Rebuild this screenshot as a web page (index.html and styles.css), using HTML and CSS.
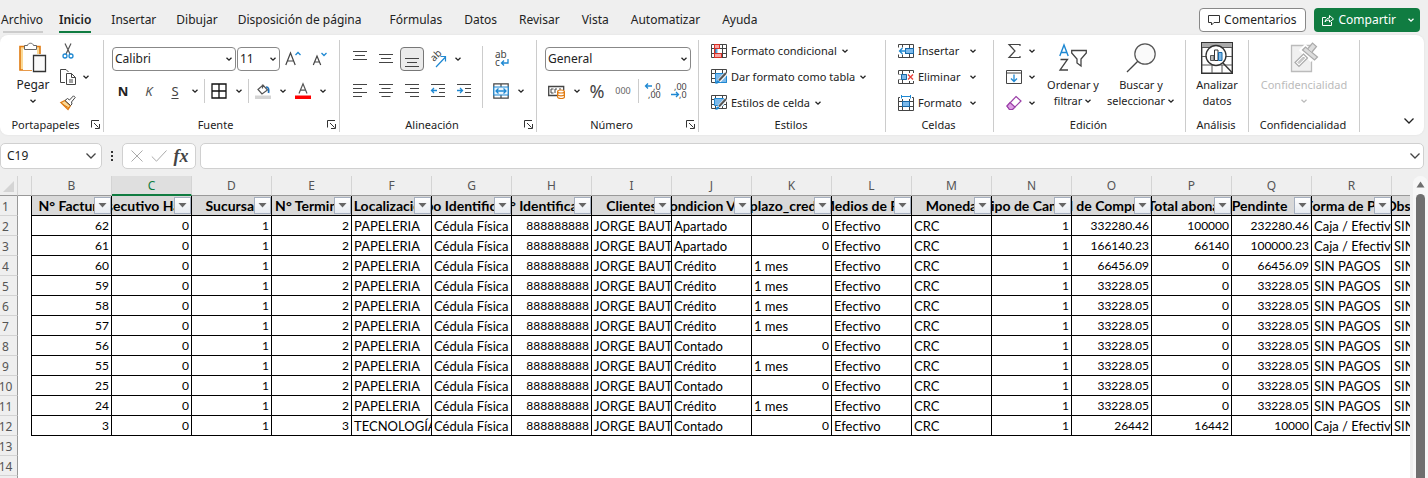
FILE: index.html
```html
<!DOCTYPE html>
<html lang="es">
<head>
<meta charset="utf-8">
<title>Facturas</title>
<link rel="stylesheet" href="styles.css">
</head>
<body>
<svg class="defs" aria-hidden="true">
  <symbol id="chev" viewBox="0 0 8 8"><path d="M1.5 2.8 4 5.2 6.5 2.8" fill="none" stroke="currentColor" stroke-width="1.3"/></symbol>
  <symbol id="launch" viewBox="0 0 9 9"><path d="M.5 7.500V.5H8M3 3l4.500 4.500M8.500 4v4.500H4" fill="none" stroke="#333"/></symbol>
  <symbol id="tablebase" viewBox="0 0 16 14"><path d="M.5.5h15v13H.5zM.5 4.500h15M.5 9.500h15M4.500.5v13M11.500.5v13" fill="#fff" stroke="#444"/></symbol>
</svg>

<div class="topbar">
  <nav class="tabs">
    <button class="tab tab-file">Archivo</button>
    <button class="tab tab-active">Inicio</button>
    <button class="tab">Insertar</button>
    <button class="tab">Dibujar</button>
    <button class="tab tab-wide">Disposición de página</button>
    <button class="tab">Fórmulas</button>
    <button class="tab">Datos</button>
    <button class="tab">Revisar</button>
    <button class="tab">Vista</button>
    <button class="tab">Automatizar</button>
    <button class="tab">Ayuda</button>
  </nav>
  <div class="actions">
    <button class="comments"><svg width="12" height="12" viewBox="0 0 12 12"><path d="M.5 1.500h11v7H6L3.500 11V8.500h-3z" fill="none" stroke="#333"/></svg>Comentarios</button>
    <button class="share"><svg width="12" height="12" viewBox="0 0 12 12"><path d="M4 3.500H.5v8h9V8M3 8c.5-3 2.500-4 4.500-4V1.500L11.500 5 7.500 8V6C5.500 6 4 6.500 3 8z" fill="none" stroke="#fff"/></svg>Compartir<svg class="chev share-chev"><use href="#chev"/></svg></button>
  </div>
</div>

<div class="ribbon">
  <section class="group g-clip">
    <div class="body">
      <button class="big">
        <svg width="28" height="32" viewBox="0 0 28 32"><path d="M1 4.500h20V28H1z" fill="#fbd995" stroke="#e07a10" stroke-width="1.600"/><path d="M4 7h14v21H4z" fill="#fff"/><path d="M5.500 7.500v-4h3C9 .5 14 .5 14.500 3.500h3v4z" fill="#fff" stroke="#666"/><path d="M13 12h14v18H13z" fill="#fff"/><path d="M14.500 13.500h12v16h-12z" fill="#fafafa" stroke="#333" stroke-width="1.300"/></svg>
        <span>Pegar</span><svg class="chev"><use href="#chev"/></svg>
      </button>
      <div class="stack">
        <button class="mini" aria-label="Cortar"><svg width="16" height="16" viewBox="0 0 16 16"><path d="M5 .5 10 11M11 .5 6 11" fill="none" stroke="#555" stroke-width="1.200"/><circle cx="5" cy="13" r="2" fill="#fff" stroke="#1e88d2" stroke-width="1.300"/><circle cx="11" cy="13" r="2" fill="#fff" stroke="#1e88d2" stroke-width="1.300"/></svg></button>
        <button class="mini" aria-label="Copiar"><svg width="16" height="16" viewBox="0 0 16 16"><path d="M5 13.500H.5V.5H6L8.500 3" fill="none" stroke="#444"/><path d="M6.500 4.500h5l4 4v7h-9zM11.500 4.500v4h4M9 11h4M9 13h4" fill="#fff" stroke="#444"/></svg><svg class="chev"><use href="#chev"/></svg></button>
        <button class="mini" aria-label="Copiar formato"><svg width="16" height="16" viewBox="0 0 16 16"><path d="M.8 7.500 5 5.500l5.500 5-2.500 4z" fill="#fbd995" stroke="#e07a10" stroke-width="1.300"/><path d="M3 9.500 9 13" stroke="#e07a10"/><path d="M5 5.500 7.500 3.500l2 1.500L13.500.8l1.700 1.700L11.500 7l.5 2-1.500 1.500z" fill="#fff" stroke="#444"/></svg></button>
      </div>
    </div>
    <footer><span>Portapapeles</span><button class="launch" aria-label="Opciones del portapapeles"><svg width="9" height="9"><use href="#launch"/></svg></button></footer>
  </section>

  <section class="group g-font">
    <div class="body rows">
      <div class="row">
        <label class="combo combo-font"><select aria-label="Fuente"><option>Calibri</option></select><svg class="chev"><use href="#chev"/></svg></label>
        <label class="combo combo-size"><select aria-label="Tamaño"><option>11</option></select><svg class="chev"><use href="#chev"/></svg></label>
        <button class="ic" aria-label="Aumentar tamaño"><svg width="16" height="16" viewBox="0 0 16 16"><path d="M.8 14 5.500 2 10.200 14M2.400 10h6.200" fill="none" stroke="#444" stroke-width="1.200"/><path d="M10.500 4 13 1.500 15.500 4" fill="none" stroke="#1e88d2" stroke-width="1.300"/></svg></button>
        <button class="ic" aria-label="Reducir tamaño"><svg width="16" height="16" viewBox="0 0 16 16"><path d="M2.300 14 6 5l3.700 9M3.600 11h4.800" fill="none" stroke="#444" stroke-width="1.200"/><path d="M10.500 2 13 4.500 15.500 2" fill="none" stroke="#1e88d2" stroke-width="1.300"/></svg></button>
      </div>
      <div class="row">
        <button class="ic bold">N</button><button class="ic italic">K</button><button class="ic under">S</button><button class="dd" aria-label="Más subrayados"><svg class="chev"><use href="#chev"/></svg></button>
        <i class="sep"></i>
        <button class="ic" aria-label="Bordes"><svg width="16" height="16" viewBox="0 0 16 16"><path d="M1 1h14v14H1zM8 1v14M1 8h14" fill="none" stroke="#111" stroke-width="1.300"/></svg></button><button class="dd" aria-label="Más bordes"><svg class="chev"><use href="#chev"/></svg></button>
        <i class="sep"></i>
        <button class="ic" aria-label="Color de relleno"><svg width="16" height="16" viewBox="0 0 16 16"><path d="M7.500 1.500v4M3 6.500 8 2l4.500 5L7 11z" fill="#fff" stroke="#555" stroke-width="1.200"/><path d="M11 4c3 0 3 3 2.500 6" fill="none" stroke="#1e6fb8" stroke-width="1.700"/><path d="M0 12.500h16V16H0z" fill="#d4d4d4"/></svg></button><button class="dd" aria-label="Más rellenos"><svg class="chev"><use href="#chev"/></svg></button>
        <button class="ic" aria-label="Color de fuente"><svg width="16" height="16" viewBox="0 0 16 16"><path d="M4 10.500 8 .8l4 9.700M5.400 7.200h5.200" fill="none" stroke="#555" stroke-width="1.200"/><path d="M0 12.500h16V16H0z" fill="#f00"/></svg></button><button class="dd" aria-label="Más colores"><svg class="chev"><use href="#chev"/></svg></button>
      </div>
    </div>
    <footer><span>Fuente</span><button class="launch" aria-label="Opciones de fuente"><svg width="9" height="9"><use href="#launch"/></svg></button></footer>
  </section>

  <section class="group g-align">
    <div class="body">
      <div class="rows">
        <div class="row">
          <button class="ic" aria-label="Alinear arriba"><svg width="16" height="16" viewBox="0 0 16 16"><path d="M1 .5h14M3 4.500h10M1 8.500h14" stroke="#444"/></svg></button>
          <button class="ic" aria-label="Alinear al medio"><svg width="16" height="16" viewBox="0 0 16 16"><path d="M1 3.500h14M3 7.500h10M1 11.500h14" stroke="#444"/></svg></button>
          <button class="ic on" aria-label="Alinear abajo"><svg width="16" height="16" viewBox="0 0 16 16"><path d="M1 7.500h14M3 11.500h10M1 15.500h14" stroke="#444"/></svg></button>
          <button class="ic" aria-label="Orientación"><svg width="18" height="18" viewBox="0 0 18 18"><text class="ab" x="0" y="0" transform="translate(5 12) rotate(-45)">ab</text><path d="m7 17 9.500-10M11.500 6.500h5v5" fill="none" stroke="#1e88d2" stroke-width="1.200"/></svg></button><button class="dd" aria-label="Más orientaciones"><svg class="chev"><use href="#chev"/></svg></button>
        </div>
        <div class="row">
          <button class="ic" aria-label="Izquierda"><svg width="16" height="16" viewBox="0 0 16 16"><path d="M1 1.500h14M1 5.500h9M1 9.500h14M1 13.500h9" stroke="#444"/></svg></button>
          <button class="ic" aria-label="Centro"><svg width="16" height="16" viewBox="0 0 16 16"><path d="M1 1.500h14M3.500 5.500h9M1 9.500h14M3.500 13.500h9" stroke="#444"/></svg></button>
          <button class="ic" aria-label="Derecha"><svg width="16" height="16" viewBox="0 0 16 16"><path d="M1 1.500h14M6 5.500h9M1 9.500h14M6 13.500h9" stroke="#444"/></svg></button>
          <button class="ic" aria-label="Disminuir sangría"><svg width="16" height="16" viewBox="0 0 16 16"><path d="M1 1.500h14M9 5.500h6M9 9.500h6M1 13.500h14" stroke="#444"/><path d="M7 7.500H1.500M4 5 1.500 7.500 4 10" fill="none" stroke="#1e88d2" stroke-width="1.300"/></svg></button>
          <button class="ic" aria-label="Aumentar sangría"><svg width="16" height="16" viewBox="0 0 16 16"><path d="M1 1.500h14M9 5.500h6M9 9.500h6M1 13.500h14" stroke="#444"/><path d="M1 7.500h5.500M4 5l2.500 2.500L4 10" fill="none" stroke="#1e88d2" stroke-width="1.300"/></svg></button>
        </div>
      </div>
      <i class="vline"></i>
      <div class="rows">
        <div class="row">
          <button class="ic" aria-label="Ajustar texto"><svg width="18" height="18" viewBox="0 0 18 18"><text class="wrap" x="3" y="8">ab</text><text class="wrap" x="3" y="16">c</text><path d="M16 9v4H9.500M12 10.500 9.500 13l2.500 2.500" fill="none" stroke="#1e88d2" stroke-width="1.300"/></svg></button>
        </div>
        <div class="row">
          <button class="ic" aria-label="Combinar y centrar"><svg width="16" height="16" viewBox="0 0 16 16"><path d="M.8.8h14.400v14.400H.8zM8 1v14" fill="#fff" stroke="#444" stroke-width="1.200"/><path d="M.8 4h14.400v8H.8z" fill="#eaf5fd" stroke="#1e88d2" stroke-width="1.200"/><path d="M3 8h10M5.500 5.500 3 8l2.500 2.500M10.500 5.500 13 8l-2.500 2.500" fill="none" stroke="#1e88d2" stroke-width="1.300"/></svg></button><button class="dd" aria-label="Más combinaciones"><svg class="chev"><use href="#chev"/></svg></button>
        </div>
      </div>
    </div>
    <footer><span>Alineación</span><button class="launch" aria-label="Opciones de alineación"><svg width="9" height="9"><use href="#launch"/></svg></button></footer>
  </section>

  <section class="group g-num">
    <div class="body rows">
      <div class="row">
        <label class="combo combo-num"><select aria-label="Formato de número"><option>General</option></select><svg class="chev"><use href="#chev"/></svg></label>
      </div>
      <div class="row">
        <button class="ic" aria-label="Formato de contabilidad"><svg width="18" height="16" viewBox="0 0 18 16"><path d="M.7 3.500h15v9H.7z" fill="#fff" stroke="#444" stroke-width="1.300"/><path d="M5.500 6H3v4h2.500M7 10V6h2M11 6h2" fill="none" stroke="#444"/><path d="M9 7h8v9H9z" fill="#fff"/><path d="M9.600 8.500c0-2 6.800-2 6.800 0v5.500c0 2-6.800 2-6.800 0zM9.600 8.500c0 2 6.800 2 6.800 0M9.600 11.300c0 2 6.800 2 6.800 0" fill="#fff" stroke="#e07a10" stroke-width="1.200"/></svg></button><button class="dd" aria-label="Más monedas"><svg class="chev"><use href="#chev"/></svg></button>
        <button class="ic pct">%</button><button class="ic zeros">000</button>
        <i class="sep"></i>
        <button class="ic" aria-label="Aumentar decimales"><svg width="18" height="18" viewBox="0 0 18 18"><text class="dec" x="9" y="8">,0</text><text class="dec" x="4" y="16">,00</text><path d="M8 4H1.500M4 1.500 1.500 4 4 6.500" fill="none" stroke="#1e88d2" stroke-width="1.300"/></svg></button>
        <button class="ic" aria-label="Disminuir decimales"><svg width="18" height="18" viewBox="0 0 18 18"><text class="dec" x="4" y="8">,00</text><text class="dec" x="9" y="16">,0</text><path d="M1 12.500h7.500M6 10l2.500 2.500L6 15" fill="none" stroke="#1e88d2" stroke-width="1.300"/></svg></button>
      </div>
    </div>
    <footer><span>Número</span><button class="launch" aria-label="Opciones de número"><svg width="9" height="9"><use href="#launch"/></svg></button></footer>
  </section>

  <section class="group g-style">
    <div class="body stack">
      <button class="mini"><svg width="16" height="14" viewBox="0 0 16 14"><use href="#tablebase"/><path d="M3.500.5h5v4h-5zM3.500 9.500h7v4h-7z" fill="#f6a5a5" stroke="#d93025"/><path d="M4.500 5h2v4h-2z" fill="#5aa9e6"/><path d="M3.500.5v13" stroke="#d93025"/></svg><span>Formato condicional</span><svg class="chev"><use href="#chev"/></svg></button>
      <button class="mini"><svg width="16" height="16" viewBox="0 0 16 16"><use href="#tablebase" width="16" height="14"/><path d="M4.500 4.500h11v9h-11z" fill="#7db9ea" stroke="#1e88d2"/><path d="M15.500 4 8 12" stroke="#fff" stroke-width="4"/><path d="m15 4-7 7.500" stroke="#555" stroke-width="2"/><path d="M3.500 15c2 0 1-3.500 3.500-3.500 2.500.5 1.500 3.500-3.500 3.500z" fill="#1e88d2"/></svg><span>Dar formato como tabla</span><svg class="chev"><use href="#chev"/></svg></button>
      <button class="mini"><svg width="16" height="16" viewBox="0 0 16 16"><use href="#tablebase" width="16" height="14"/><path d="M3.500 3.500h9v7h-9z" fill="#7db9ea" stroke="#1e88d2"/><path d="M15.500 4 8 12" stroke="#fff" stroke-width="4"/><path d="m15 4-7 7.500" stroke="#555" stroke-width="2"/><path d="M3.500 15c2 0 1-3.500 3.500-3.500 2.500.5 1.500 3.500-3.500 3.500z" fill="#1e88d2"/></svg><span>Estilos de celda</span><svg class="chev"><use href="#chev"/></svg></button>
    </div>
    <footer><span>Estilos</span></footer>
  </section>

  <section class="group g-cells">
    <div class="body stack">
      <button class="mini"><svg width="16" height="14" viewBox="0 0 16 14"><use href="#tablebase"/><path d="M7.500 4.500h8v5h-8z" fill="#7db9ea" stroke="#1668a8"/><path d="M0 3.500h7v7H0z" fill="#fff"/><path d="M8 7H1.500M4.500 4l-3 3 3 3" fill="none" stroke="#1e88d2" stroke-width="1.300"/></svg><span>Insertar</span><svg class="chev"><use href="#chev"/></svg></button>
      <button class="mini"><svg width="16" height="14" viewBox="0 0 16 14"><use href="#tablebase"/><path d="M0 4.500h9v5H0z" fill="#fff"/><path d="M3.500 4.500h5v5h-5z" fill="#7db9ea" stroke="#1668a8"/><path d="M9 3h7v8H9z" fill="#fff"/><path d="m10 4.500 5 5M15 4.500l-5 5" stroke="#e8413b" stroke-width="1.400"/></svg><span>Eliminar</span><svg class="chev"><use href="#chev"/></svg></button>
      <button class="mini"><svg width="16" height="16" viewBox="0 0 16 16"><use href="#tablebase" y="2" width="16" height="14"/><path d="M4.500 6.500h7v5h-7z" fill="#7db9ea" stroke="#1668a8"/><path d="M2 0h12v4H2z" fill="#fff"/><path d="M3.500 0v3.500M12.500 0v3.500M3.500 1.500h9" stroke="#1e88d2"/></svg><span>Formato</span><svg class="chev"><use href="#chev"/></svg></button>
    </div>
    <footer><span>Celdas</span></footer>
  </section>

  <section class="group g-edit">
    <div class="body">
      <div class="stack">
        <button class="mini" aria-label="Autosuma"><svg width="16" height="16" viewBox="0 0 16 16"><path d="M14 3V1.500H3L9 8l-6 6.500h11V13" fill="none" stroke="#444" stroke-width="1.200"/></svg><svg class="chev"><use href="#chev"/></svg></button>
        <button class="mini" aria-label="Rellenar"><svg width="16" height="14" viewBox="0 0 16 14"><path d="M.5.5h15v13H.5zM.5 3h15" fill="#fff" stroke="#444"/><path d="M8 4.500v7M5 8.500l3 3 3-3" fill="none" stroke="#1e88d2" stroke-width="1.300"/></svg><svg class="chev"><use href="#chev"/></svg></button>
        <button class="mini" aria-label="Borrar"><svg width="16" height="16" viewBox="0 0 16 16"><path d="m10 1.500 5 4.500-8.500 8.500h-3L1 11z" fill="#fff" stroke="#9b3fa8" stroke-width="1.200"/><path d="m4 7.500 5 4.500-2.500 2.500h-3L1 11z" fill="#dda0e4" stroke="#9b3fa8" stroke-width="1.200"/></svg><svg class="chev"><use href="#chev"/></svg></button>
      </div>
      <button class="big">
        <svg width="28" height="32" viewBox="0 0 28 32"><path d="M.8 14 5 3l4.200 11M2.300 10.500h5.400" fill="none" stroke="#1e88d2" stroke-width="1.400"/><path d="M1.500 17.500h7L1 28h8" fill="none" stroke="#444" stroke-width="1.300"/><path d="M12.700 8.500h14.600v2.500L22 17v7l-4-3v-4l-5.300-6z" fill="#fff" stroke="#444" stroke-width="1.300"/></svg>
        <span>Ordenar y</span><span class="line">filtrar<svg class="chev"><use href="#chev"/></svg></span>
      </button>
      <button class="big">
        <svg width="30" height="32" viewBox="0 0 30 32"><circle cx="19" cy="12" r="10.200" fill="#fafafa" stroke="#555" stroke-width="1.200"/><path d="M11.800 19.200 1 30" stroke="#444" stroke-width="1.300"/></svg>
        <span>Buscar y</span><span class="line">seleccionar<svg class="chev"><use href="#chev"/></svg></span>
      </button>
    </div>
    <footer><span>Edición</span></footer>
  </section>

  <section class="group g-analysis">
    <div class="body">
      <button class="big">
        <svg width="32" height="32" viewBox="0 0 32 32"><path d="M.7.7h30.600v30.600H.7z" fill="#fff" stroke="#333" stroke-width="1.400"/><path d="M1 1h30v4H1z" fill="#aaa"/><path d="M1 5.500h30M1 14.500h30M1 23h30M11 23v8M21 23v8" stroke="#555"/><circle cx="15" cy="13.500" r="10" fill="#fff" stroke="#333" stroke-width="1.300"/><path d="m22 21 9.500 10" stroke="#333" stroke-width="1.400"/><path d="M9.500 13.500h3.500v5H9.500z" fill="#bbb" stroke="#555"/><path d="M13.500 8h3.500v10.500h-3.500z" fill="#fff" stroke="#333"/><path d="M17.500 10.500H21v8h-3.500z" fill="#7db9ea" stroke="#1668a8"/></svg>
        <span>Analizar</span><span>datos</span>
      </button>
    </div>
    <footer><span>Análisis</span></footer>
  </section>

  <section class="group g-conf">
    <div class="body">
      <button class="big" disabled>
        <svg width="28" height="32" viewBox="0 0 28 32"><path d="M1.500 3.500h20v26h-20z" fill="#f0f0f0" stroke="#bbb" stroke-width="1.300"/><path d="M12 5 24 17" stroke="#fff" stroke-width="9"/><path d="M5 20.500 13.500 12l4 4L9 24.500z" fill="#fff" stroke="#aaa" stroke-width="1.200"/><path d="m8 20.500 5.500-5.500 1 1L9 21.500z" fill="#ddd" stroke="#aaa"/><path d="m12.500 8 3-3 12 10-3 3z" fill="#ddd" stroke="#aaa" stroke-width="1.200"/><path d="M18 6.500 22.500 1l4 3.500L22 10" fill="#ddd" stroke="#aaa" stroke-width="1.200"/></svg>
        <span>Confidencialidad</span><svg class="chev"><use href="#chev"/></svg>
      </button>
    </div>
    <footer><span>Confidencialidad</span></footer>
  </section>
  <button class="collapse" aria-label="Contraer la cinta"><svg width="12" height="8" viewBox="0 0 12 8"><path d="M1.500 1.500 6 6l4.500-4.500" fill="none" stroke="#222" stroke-width="1.300"/></svg></button>
</div>

<div class="formula">
  <label class="combo namebox"><select aria-label="Cuadro de nombres"><option>C19</option></select><svg width="12" height="8" viewBox="0 0 12 8"><path d="M1.500 1.500 6 6l4.500-4.500" fill="none" stroke="#444" stroke-width="1.300"/></svg></label>
  <svg width="4" height="14" viewBox="0 0 4 14"><path d="M1 2h2v2H1zM1 6h2v2H1zM1 10h2v2H1z" fill="#333"/></svg>
  <div class="fxbox">
    <button aria-label="Cancelar"><svg width="14" height="14" viewBox="0 0 14 14"><path d="m1.500 1.500 11 11M12.500 1.500l-11 11" stroke="#aaa"/></svg></button>
    <button aria-label="Introducir"><svg width="16" height="14" viewBox="0 0 16 14"><path d="m.8 7.500 4.700 4.700L15.500 1.500" fill="none" stroke="#aaa"/></svg></button>
    <button class="fx"><i>fx</i></button>
  </div>
  <div class="fbar"><input type="text" aria-label="Barra de fórmulas"><svg width="12" height="8" viewBox="0 0 12 8"><path d="M1.500 1.500 6 6l4.500-4.500" fill="none" stroke="#444" stroke-width="1.300"/></svg></div>
</div>

<main class="work">
  <div class="sheet">
    <table class="grid">
      <colgroup><col class="c-num"><col class="c-a"><col span="18" class="c-data"></colgroup>
      <thead></thead>
      <tbody></tbody>
    </table>
  </div>
  <div class="scroll"><svg width="9" height="7" viewBox="0 0 9 7"><path d="M4.500.5 8.500 6.500h-8z" fill="#6f6f6f"/></svg><div class="thumb"></div></div>
</main>
<script src="sheet.js"></script>
</body>
</html>
```

FILE: styles.css
```css
* { box-sizing: border-box; }
html, body { height: 100%; }
body {
  margin: 0;
  display: flex;
  flex-direction: column;
  overflow: hidden;
  background: #efefef;
  color: #222;
  font: 12px/16px "Noto Sans", "Open Sans", sans-serif;
}
button { font: inherit; color: inherit; background: none; border: 0; padding: 0; margin: 0; white-space: nowrap; }
svg { flex: none; display: block; overflow: visible; }
.defs { position: absolute; width: 0; height: 0; }
.chev { width: 8px; height: 8px; }

/* Tabs */
.topbar { display: flex; justify-content: space-between; align-items: flex-start; height: 35px; padding: 8px 8px 0 1px; flex: none; }
.tabs { display: flex; gap: 20px; }
.tab { height: 25px; padding-top: 1px; border-bottom: 2px solid transparent; }
.tab:nth-child(n+5) { margin-right: 2px; }
.tab.tab-wide { margin-right: 8px; }
.tab-file { margin-right: -4px; border-image: linear-gradient(to right, transparent 3px, #ccc 3px) 1; border-style: solid; border-width: 0 0 2px; }
.tab-active { font-weight: 600; border-bottom-color: #107c41; }
.actions { display: flex; gap: 8px; }
.comments, .share { display: flex; align-items: center; height: 24px; gap: 4px; border-radius: 4px; }
.comments { padding: 0 9px 0 8px; border: 1px solid #888; background: #fff; }
.share { padding: 0 5px 0 8px; background: #107c41; color: #fff; }
.share-chev { margin-left: 7px; }

/* Ribbon */
.ribbon { display: flex; flex: none; background: #fff; border-radius: 8px; margin-right: 4px; padding: 5px 0 3px; box-shadow: 0 0 2px #ddd; }
.group { display: flex; flex-direction: column; flex: none; border-right: 1px solid #ccc; }
.body { display: flex; height: 77px; }
.group footer { display: flex; align-items: center; height: 15px; padding-right: 2px; font-size: 11px; line-height: 14px; }
.group footer span { flex: 1; text-align: center; }
.launch { width: 10px; }
.g-clip { width: 104px; }
.g-font { width: 236px; }
.g-align { width: 197px; }
.g-num { width: 162px; }
.g-style { width: 187px; }
.g-cells { width: 108px; }
.g-edit { width: 192px; }
.g-analysis { width: 63px; }
.g-conf { width: 111px; }
.g-clip .body { padding-left: 17px; gap: 11px; }
.g-font .body { padding-left: 6px; }
.g-align .body { padding-left: 7px; }
.g-num .body { padding-left: 7px; }
.g-style .body, .g-cells .body { padding-left: 12px; font-size: 11px; }
.g-edit .body { padding-left: 12px; gap: 6px; font-size: 11px; }
.g-analysis .body, .g-conf .body { justify-content: center; font-size: 11px; }

.body.rows, .rows { display: flex; flex-direction: column; gap: 8px; padding-top: 7px; }
.row { display: flex; align-items: center; height: 24px; }
.ic { width: 26px; height: 24px; display: flex; align-items: center; justify-content: center; }
.on { width: 24px; margin: 0 1px; border: 1px solid #777; border-radius: 4px; background: #ebebeb; }
.dd { width: 14px; height: 24px; display: flex; align-items: center; justify-content: center; }
.sep { width: 1px; height: 24px; margin: 0 1px 0 2px; background: #ccc; }
.vline { width: 1px; height: 62px; margin: 6px 5px 0; background: #ccc; }
.bold { font-weight: 700; font-size: 13px; }
.italic { font-style: italic; font-size: 13px; color: #555; }
.under { text-decoration: underline; text-underline-offset: 2px; font-size: 13px; color: #444; }
.pct { font-size: 18px; color: #444; }
.zeros { font-size: 9px; color: #666; }
.ab { font-size: 10px; fill: #444; }
.wrap { font-size: 10px; fill: #444; }
.dec { font-size: 9px; fill: #444; }

.stack { display: flex; flex-direction: column; }
.mini { display: flex; flex: none; align-items: center; gap: 4px; height: 26px; padding-bottom: 4px; }
.g-clip .mini, .g-edit .mini { gap: 6px; }
.g-clip .big { width: 32px; }
.g-edit .big { width: 62px; }
.g-edit .big + .big { width: 74px; margin-left: -6px; }
.g-cells .mini { padding-right: 16px; gap: 4px; }
.g-cells .mini .chev { margin-left: auto; }
.big { display: flex; flex-direction: column; align-items: center; padding-top: 2px; }
.big > svg:first-child { margin-bottom: 3px; }
.big .line { display: flex; align-items: center; gap: 2px; }
.big > .chev { margin-top: 4px; }
.big:disabled { color: #bbb; }
.collapse { margin: auto 7px 5px auto; padding: 2px; }

/* Boxes holding a list and its arrow */
.combo { display: grid; align-items: center; }
.combo > * { grid-area: 1 / 1; }
.combo svg { justify-self: end; margin-right: 3px; pointer-events: none; }
.combo select { appearance: none; width: 100%; height: 24px; padding: 0 2px; border: 1px solid #888; border-radius: 4px; background: #fff; font: inherit; color: inherit; }
.combo-font { width: 124px; margin: 0 1px 0 2px; }
.combo-size { width: 43px; }
.combo-num { width: 146px; margin-left: 1px; }

/* Formula bar */
.formula { display: flex; align-items: center; flex: none; gap: 8px; padding: 8px 4px 7px 0; }
.namebox { width: 102px; }
.namebox select, .fxbox, .fbar { height: 26px; border: 1px solid #d0d0d0; border-radius: 5px; background: #fff; }
.namebox select { padding-left: 6px; }
.namebox svg { margin-right: 5px; }
.fxbox { display: flex; align-items: center; justify-content: space-around; width: 74px; padding: 0 3px; }
.fx { font: bold 18px/20px "Liberation Serif", serif; color: #444; }
.fbar { flex: 1; display: flex; align-items: center; padding: 0 2px 0 4px; margin-left: -4px; }
.fbar input { flex: 1; border: 0; outline: 0; background: none; font: inherit; }

/* Worksheet */
.work { display: flex; flex: 1; min-height: 0; gap: 3px; }
.sheet { flex: 1; min-width: 0; overflow: hidden; background: linear-gradient(#efefef 20px, #fff 20px); }
.grid { table-layout: fixed; width: 1472px; border-spacing: 0; font: 13px/18px Lato, Carlito, sans-serif; color: #000; }
.c-num { width: 18px; }
.c-a { width: 14px; }
.c-data { width: 80px; }
.grid th, .grid td { height: 20px; padding: 0; }
.grid .letter { font: 12px/18px "Noto Sans", sans-serif; color: #555; border-right: 1px solid #d4d4d4; border-bottom: 1px solid #999; padding-top: 1px; }
.grid .letter.current { background: #dfdfdf; color: #107c41; border-bottom: 2px solid #107c41; line-height: 17px; }
.num { font: 12px/19px "Noto Sans", sans-serif; color: #555; background: #efefef; border-right: 1px solid #999; border-bottom: 1px solid #d4d4d4; }
.num .clip { padding-right: 8px; justify-content: center; }
.cell { border-right: 1px solid #000; border-bottom: 1px solid #000; }
.edge { border-right: 1px solid #000; }
.clip { display: flex; height: 19px; padding: 1px 2px 0; overflow: hidden; white-space: pre; }
.right .clip { justify-content: flex-end; font-size: 12px; }
.head { position: relative; background: #d9d9d9; font-weight: 700; font-size: 14px; }
.head .clip { justify-content: center; padding: 1px 0 0; }
.filter { position: absolute; right: 0; top: 1px; width: 17px; height: 17px; display: flex; align-items: center; justify-content: center; border: 1px solid #a5afbf; background: linear-gradient(#fff, #e6eaf0); }

.scroll { width: 15px; display: flex; flex-direction: column; align-items: center; gap: 6px; padding-top: 5px; background: #f7f7f7; border-radius: 8px 8px 0 0; }
.thumb { flex: 1; width: 9px; background: #6f6f6f; border-radius: 5px 5px 0 0; }
```

FILE: sheet.js
```js
const letters = [..."BCDEFGHIJKLMNOPQRS"];
const titles = [
  "N° Factura", "Consecutivo Hacienda", "Sucursal", "N° Terminal", "Localización",
  "Tipo Identificación", "N° Identificación", "Clientes", "Condicion Venta",
  "plazo_credito", "Medios de Pago", "Moneda", "Tipo de Cambio",
  "Total de Comprobante", "Total abonado", "Pendinte       ", "Forma de Pago", "Observaciones"
];
// factura, terminal, localización, condición, plazo, total, abonado, pendiente, forma de pago
const sales = [
  [62, 2, "PAPELERIA", "Apartado", 0, "332280.46", 100000, "232280.46", "Caja / Efectivo"],
  [61, 2, "PAPELERIA", "Apartado", 0, "166140.23", 66140, "100000.23", "Caja / Efectivo"],
  [60, 2, "PAPELERIA", "Crédito", "1 mes", "66456.09", 0, "66456.09", "SIN PAGOS"],
  [59, 2, "PAPELERIA", "Crédito", "1 mes", "33228.05", 0, "33228.05", "SIN PAGOS"],
  [58, 2, "PAPELERIA", "Crédito", "1 mes", "33228.05", 0, "33228.05", "SIN PAGOS"],
  [57, 2, "PAPELERIA", "Crédito", "1 mes", "33228.05", 0, "33228.05", "SIN PAGOS"],
  [56, 2, "PAPELERIA", "Contado", 0, "33228.05", 0, "33228.05", "SIN PAGOS"],
  [55, 2, "PAPELERIA", "Crédito", "1 mes", "33228.05", 0, "33228.05", "SIN PAGOS"],
  [25, 2, "PAPELERIA", "Contado", 0, "33228.05", 0, "33228.05", "SIN PAGOS"],
  [24, 2, "PAPELERIA", "Crédito", "1 mes", "33228.05", 0, "33228.05", "SIN PAGOS"],
  [3, 3, "TECNOLOGÍA", "Contado", 0, "26442", 16442, "10000", "Caja / Efectivo"]
];

const clip = text => `<div class="clip"><span>${text}</span></div>`;
const rowHead = n => `<th scope="row" class="num">${clip(n)}</th>`;
const arrow = '<svg width="9" height="5" viewBox="0 0 9 5"><path d="M.5 0h8l-4 4.500z" fill="#666"/></svg>';

document.querySelector(".grid thead").innerHTML =
  '<tr><th class="letter"><svg width="14" height="13" viewBox="0 0 14 13"><path d="M14 1v11H3z" fill="#d4d4d4"/></svg></th><th class="letter"></th>' +
  letters.map(l => `<th scope="col" class="letter${l === "C" ? " current" : ""}">${l}</th>`).join("") + "</tr>";

let rows = `<tr>${rowHead(1)}<td class="edge"></td>` +
  titles.map(t => `<th scope="col" class="cell head">${clip(t)}<button class="filter" aria-label="Filtrar ${t.trim()}">${arrow}</button></th>`).join("") + "</tr>";

sales.forEach((s, i) => {
  const [id, term, place, cond, days, total, paid, due, pay] = s;
  const values = [id, 0, 1, term, place, "Cédula Física", "888888888", "JORGE BAUTI", cond, days,
    "Efectivo", "CRC", 1, total, paid, due, pay, "SIN"];
  rows += `<tr>${rowHead(i + 2)}<td class="edge"></td>` + values.map(v =>
    `<td class="cell${/^[\d.]+$/.test(v) ? " right" : ""}">${clip(v)}</td>`).join("") + "</tr>";
});
for (let n = 13; n <= 15; n++) rows += `<tr>${rowHead(n)}<td colspan="19"></td></tr>`;
document.querySelector(".grid tbody").innerHTML = rows;
```
